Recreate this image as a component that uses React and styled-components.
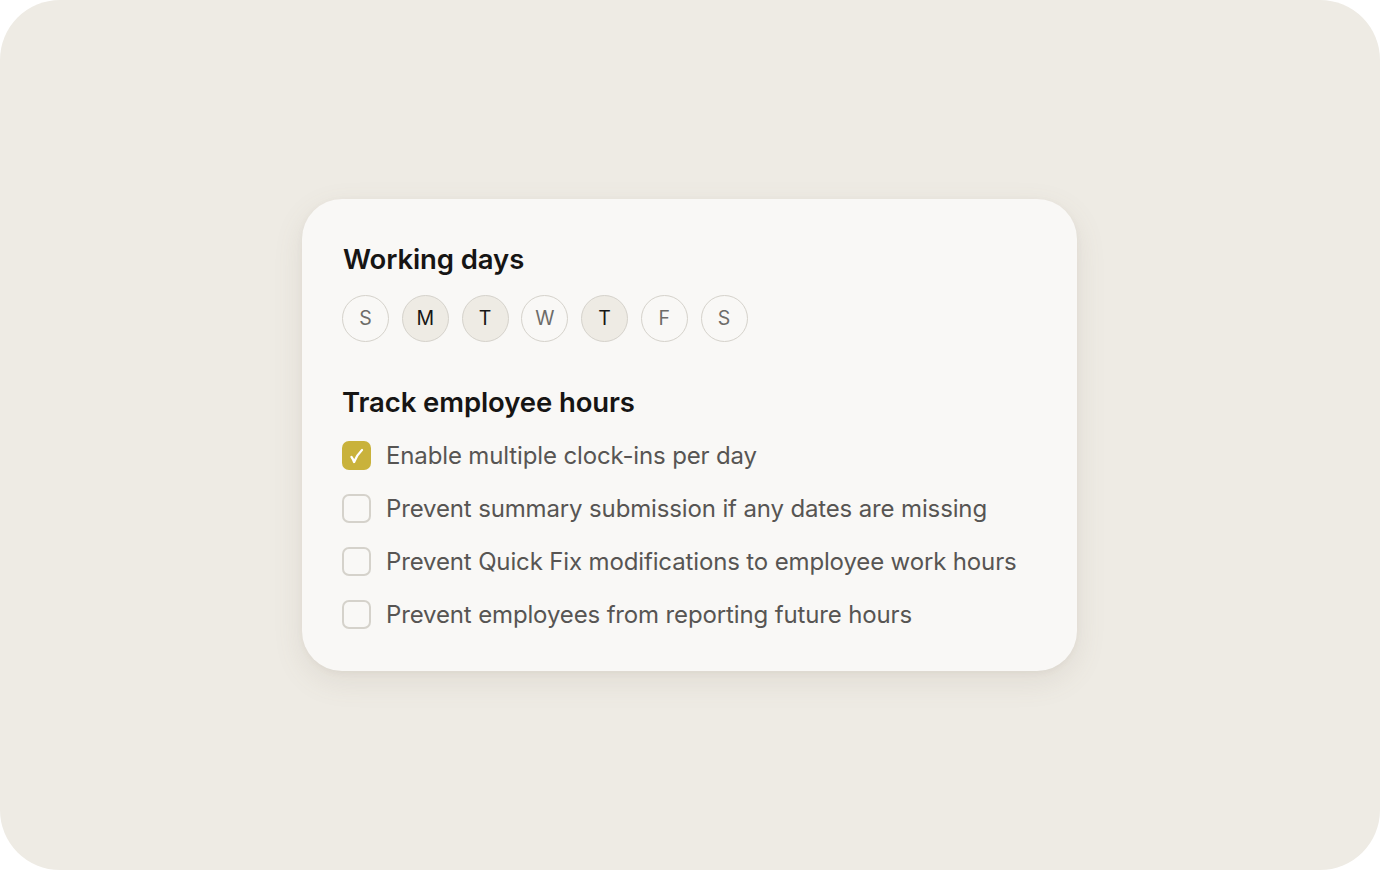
import React, { useState } from "react";
import styled, { createGlobalStyle } from "styled-components";

const Global = createGlobalStyle`
  html, body { margin: 0; padding: 0; background: #ffffff; }
  body { font-family: Inter, "Noto Sans", sans-serif; }
  * { box-sizing: border-box; }
`;

const Page = styled.div`
  width: 1380px;
  height: 870px;
  background: #eeebe4;
  border-radius: 60px;
  display: flex;
  align-items: center;
  justify-content: center;
  padding-bottom: 1px;
`;

const Card = styled.div`
  width: 775px;
  height: 472px;
  margin-left: -1px;
  background: #f9f8f6;
  border-radius: 40px;
  box-shadow: 0 10px 30px rgba(120, 110, 90, 0.12), 0 2px 6px rgba(120, 110, 90, 0.06);
  padding: 41px 40px 0 40px;
  display: flex;
  flex-direction: column;
`;

const Heading = styled.h2`
  margin: 0;
  font-size: 27.5px;
  line-height: 38px;
  font-weight: 600;
  color: #161514;
  letter-spacing: -0.1px;
  padding-left: ${(p) => p.$indent || 0}px;
`;

const DaysRow = styled.div`
  display: flex;
  gap: 12.75px;
  margin-top: 17px;
  margin-bottom: 41px;
`;

const Day = styled.button`
  width: 47px;
  height: 47px;
  border-radius: 50%;
  border: 1.5px solid #d5d2cb;
  background: ${(p) => (p.$on ? "#eeebe4" : "#f9f8f6")};
  color: ${(p) => (p.$on ? "#171615" : "#6e6c69")};
  font-family: Inter, "Noto Sans", sans-serif;
  font-size: 19.5px;
  font-weight: 400;
  display: flex;
  align-items: center;
  justify-content: center;
  padding: 0;
  cursor: pointer;
`;

const List = styled.div`
  display: flex;
  flex-direction: column;
  gap: 24px;
  margin-top: 20px;
`;

const Row = styled.label`
  display: flex;
  align-items: center;
  gap: 15px;
  height: 29px;
  cursor: pointer;
`;

const Box = styled.span`
  width: 29px;
  height: 29px;
  flex: none;
  border-radius: 7px;
  border: ${(p) => (p.$on ? "none" : "2px solid #d5d2cb")};
  background: ${(p) => (p.$on ? "#c9b23b" : "transparent")};
  display: flex;
  align-items: center;
  justify-content: center;
`;

const Label = styled.span`
  font-size: 24px;
  line-height: 29px;
  color: #575553;
  font-weight: 400;
  letter-spacing: -0.14px;
  padding-top: 1px;
`;

const Check = () => (
  <svg width="29" height="29" viewBox="0 0 29 29" fill="none">
    <path
      d="M9.5 16 C10.6 17.4 11.4 19 12.1 21 C13.8 16.6 16.4 12.4 20 9"
      stroke="#ffffff"
      strokeWidth="2.3"
      strokeLinecap="round"
      strokeLinejoin="round"
    />
  </svg>
);

const days = [
  ["S", false],
  ["M", true],
  ["T", true],
  ["W", false],
  ["T", true],
  ["F", false],
  ["S", false],
];

const options = [
  ["Enable multiple clock-ins per day", true],
  ["Prevent summary submission if any dates are missing", false],
  ["Prevent Quick Fix modifications to employee work hours", false],
  ["Prevent employees from reporting future hours", false],
];

export default function App() {
  const [sel, setSel] = useState(days.map((d) => d[1]));
  const [opts, setOpts] = useState(options.map((o) => o[1]));
  return (
    <>
      <Global />
      <Page>
        <Card>
          <Heading $indent={1}>Working days</Heading>
          <DaysRow>
            {days.map(([l], i) => (
              <Day
                key={i}
                $on={sel[i]}
                onClick={() => setSel(sel.map((v, j) => (j === i ? !v : v)))}
              >
                {l}
              </Day>
            ))}
          </DaysRow>
          <Heading>Track employee hours</Heading>
          <List>
            {options.map(([t], i) => (
              <Row
                key={i}
                onClick={() => setOpts(opts.map((v, j) => (j === i ? !v : v)))}
              >
                <Box $on={opts[i]}>{opts[i] && <Check />}</Box>
                <Label>{t}</Label>
              </Row>
            ))}
          </List>
        </Card>
      </Page>
    </>
  );
}
